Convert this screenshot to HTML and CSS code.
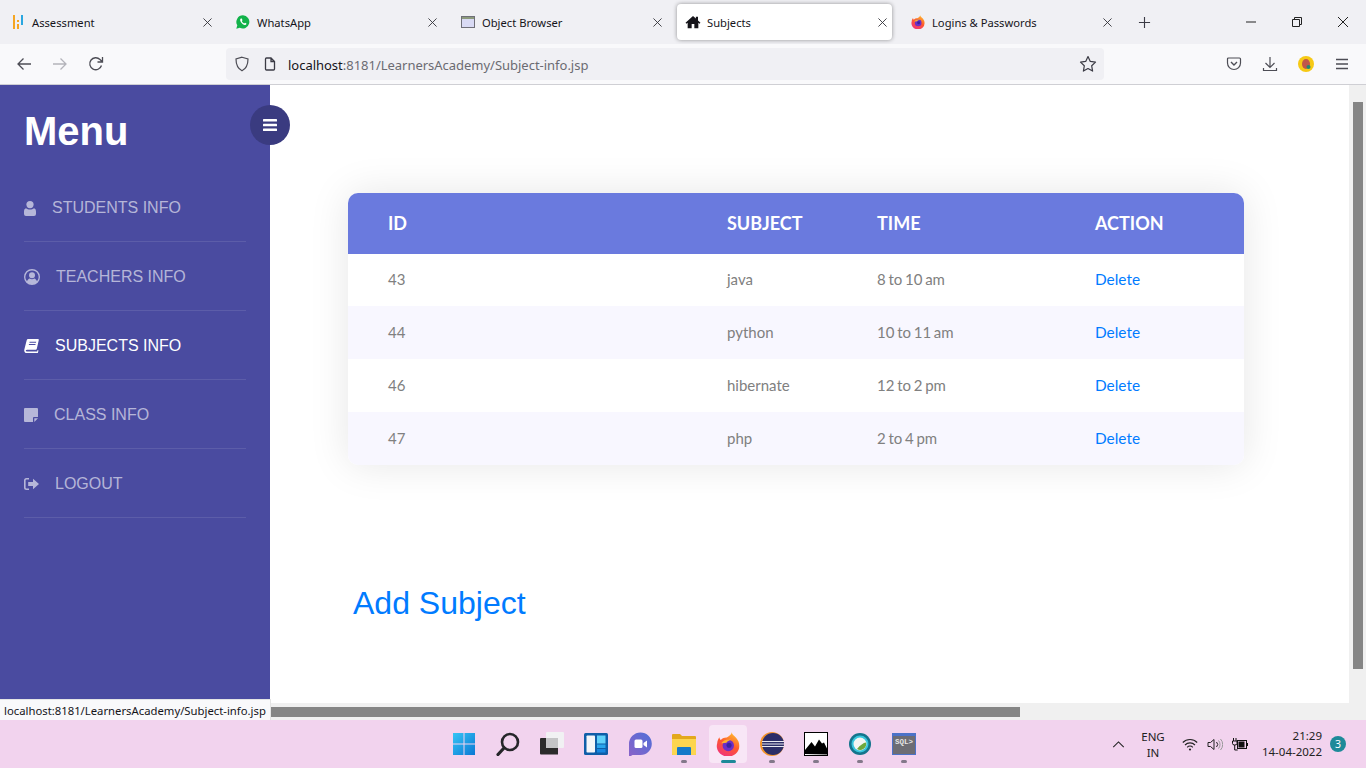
FILE: index.html
```html
<!DOCTYPE html>
<html lang="en">
  <head>
    <meta charset="UTF-8" />
    <meta name="viewport" content="width=device-width, initial-scale=1.0" />
    <title>Subjects</title>
    <link rel="stylesheet" href="styles.css">
  </head>
  <body>
    <!-- browser tabs -->
    <div class="tabbar">
      <div class="tab">
        <svg class="tab-icon" viewBox="0 0 14 14"><rect x="2" y="0" width="2" height="14" fill="#f5a623"/><rect x="6" y="5" width="2" height="2" fill="#f5a623"/><rect x="6" y="9" width="2" height="5" fill="#f5a623"/><rect x="10" y="0" width="2" height="10" fill="#2aa7e0"/></svg>
        <span class="tab-title">Assessment</span>
        <svg class="tab-close" viewBox="0 0 10 10"><path d="M.5.5l9 9M9.500.5l-9 9"/></svg>
      </div>
      <div class="tab">
        <svg class="tab-icon" viewBox="0 0 14 14"><path d="M7 .3a6.600 6.600 0 0 0-5.700 10L.3 13.700l3.500-.9A6.600 6.600 0 1 0 7 .3z" fill="#12b24a"/><path d="M4.800 3.600c-.9.7-.9 2 .2 3.600 1.200 1.700 2.800 2.900 4.200 2.700.8-.1 1.300-.8 1.200-1.400L9 7.700l-.8.8C7.200 8.100 6.200 7 5.800 6.100l.7-.8-.7-1.700z" fill="#fff"/></svg>
        <span class="tab-title">WhatsApp</span>
        <svg class="tab-close" viewBox="0 0 10 10"><path d="M.5.5l9 9M9.500.5l-9 9"/></svg>
      </div>
      <div class="tab">
        <svg class="tab-icon" viewBox="0 0 14 14"><rect x=".5" y="1.500" width="13" height="11" fill="#d9daf4" stroke="#6f6f78"/><rect x="1" y="2" width="12" height="2" fill="#8c9a7c"/></svg>
        <span class="tab-title">Object Browser</span>
        <svg class="tab-close" viewBox="0 0 10 10"><path d="M.5.5l9 9M9.500.5l-9 9"/></svg>
      </div>
      <div class="tab tab-active">
        <svg class="tab-icon tab-icon-home" viewBox="0 0 24 24"><path d="M12 3 .8 13l1.500 1.700L4 13.300V21.500h6v-6.500h4v6.500h6v-8.200l1.700 1.400L23.200 13 19.500 9.700V4h-3.200v2.800z" fill="#15141a"/></svg>
        <span class="tab-title">Subjects</span>
        <svg class="tab-close" viewBox="0 0 10 10"><path d="M.5.5l9 9M9.500.5l-9 9"/></svg>
      </div>
      <div class="tab">
        <svg class="tab-icon" viewBox="0 0 16 16"><use href="#firefox"/></svg>
        <span class="tab-title">Logins &amp; Passwords</span>
        <svg class="tab-close" viewBox="0 0 10 10"><path d="M.5.5l9 9M9.500.5l-9 9"/></svg>
      </div>
      <svg class="tab-new" viewBox="0 0 14 14"><path d="M7 1v12M1 7h12" stroke="#3b3b45" stroke-width="1.200" fill="none"/></svg>
      <div class="window-btns">
        <svg viewBox="0 0 12 12"><path d="M1 6h10" stroke="#222" fill="none"/></svg>
        <svg viewBox="0 0 12 12"><path d="M1.500 3.500h7v7h-7zM3.500 3.500v-2h7v7h-2" stroke="#222" fill="none"/></svg>
        <svg viewBox="0 0 12 12"><path d="M1 1l10 10M11 1 1 11" stroke="#222" fill="none"/></svg>
      </div>
    </div>

    <!-- address bar -->
    <div class="toolbar">
      <svg class="tool-icon tool-back" viewBox="0 0 16 16"><path d="M15 8H2M7.500 2.500 2 8l5.500 5.500" stroke="#4d4d55" stroke-width="1.300" fill="none"/></svg>
      <svg class="tool-icon tool-forward" viewBox="0 0 16 16"><path d="M1 8h13M8.500 2.500 14 8l-5.500 5.500" stroke="#b4b4ba" stroke-width="1.300" fill="none"/></svg>
      <svg class="tool-icon tool-reload" viewBox="0 0 16 16"><path d="M13.500 9.500A6 6 0 1 1 12 3.500L14 5.500M14.500 1v5h-5" stroke="#4d4d55" stroke-width="1.300" fill="none"/></svg>
      <div class="urlbar">
        <svg class="url-shield" viewBox="0 0 16 16"><path d="M8 1.200 14 3c0 5.500-1.500 9.500-6 11.800C3.500 12.500 2 8.500 2 3z" stroke="#4d4d55" stroke-width="1.200" fill="none"/></svg>
        <svg class="url-page" viewBox="0 0 12 14"><path d="M1.500 2q0-1 1-1h4.500l3.500 3.500V12q0 1-1 1h-7q-1 0-1-1zM7 1v3.500h3.500" stroke="#3b3b45" stroke-width="1.300" fill="none"/></svg>
        <span class="url-text"><b class="url-host">localhost</b>:8181/LearnersAcademy/Subject-info.jsp</span>
        <svg class="url-star" viewBox="0 0 18 18"><path d="m9 1.500 2.300 4.900 5.200.7-3.800 3.700.9 5.300L9 13.500l-4.600 2.600.9-5.300-3.800-3.700 5.200-.7z" stroke="#3b3b45" stroke-width="1.200" fill="none" stroke-linejoin="round"/></svg>
      </div>
      <div class="tool-right">
        <svg viewBox="0 0 16 16"><path d="M2.500 2h11q1 0 1 1v4a6.500 6.500 0 0 1-13 0V3q0-1 1-1z" stroke="#4d4d55" stroke-width="1.200" fill="none"/><path d="m5 6 3 3 3-3" stroke="#4d4d55" stroke-width="1.400" fill="none"/></svg>
        <svg viewBox="0 0 16 16"><path d="M8 1v10M3.500 7 8 11.500 12.500 7M1.500 12v2.500h13V12" stroke="#4d4d55" stroke-width="1.200" fill="none"/></svg>
        <svg viewBox="0 0 16 16"><circle cx="8" cy="8" r="8" fill="#f6c915"/><ellipse cx="8" cy="8" rx="4" ry="5" fill="#c0564a"/><circle cx="10.500" cy="11" r="2" fill="#1f8a70"/></svg>
        <svg viewBox="0 0 16 16"><path d="M2 3.500h12M2 8h12M2 12.500h12" stroke="#4d4d55" stroke-width="1.300" fill="none"/></svg>
      </div>
    </div>

    <!-- the page itself -->
    <div class="viewport">
      <nav class="sidebar">
        <h1 class="menu-title">Menu</h1>
        <button class="menu-toggle">
          <svg viewBox="0 0 14 12"><rect y="0" width="14" height="2.600" rx=".6"/><rect y="4.700" width="14" height="2.600" rx=".6"/><rect y="9.400" width="14" height="2.600" rx=".6"/></svg>
        </button>
        <ul class="menu-list">
          <li class="menu-item">
            <svg class="menu-icon icon-students" viewBox="0 0 12 15"><circle cx="6" cy="3.600" r="3.600"/><path d="M2 7.300c1 .8 2.500 1.200 4 1.200s3-.4 4-1.200c1.300.3 2 1.500 2 3.500v2.200q0 2-2 2H2q-2 0-2-2v-2.200c0-2 .7-3.200 2-3.500z"/></svg>
            <span class="label-students">STUDENTS INFO</span>
          </li>
          <li class="menu-item">
            <svg class="menu-icon icon-teachers" viewBox="0 0 16 16"><path fill-rule="evenodd" d="M8 0a8 8 0 1 0 0 16A8 8 0 0 0 8 0zm0 1.500a6.500 6.500 0 0 1 5 10.700c-.6-1.500-1.500-2.400-2.800-2.700-.6.500-1.300.8-2.200.8s-1.600-.3-2.200-.8c-1.300.3-2.200 1.200-2.800 2.700A6.500 6.500 0 0 1 8 1.500z"/><circle cx="8" cy="6.200" r="3"/></svg>
            <span class="label-teachers">TEACHERS INFO</span>
          </li>
          <li class="menu-item menu-item-active">
            <svg class="menu-icon icon-subjects" viewBox="0 0 15 14"><path d="M4.200 0H14q1 0 .8 1l-2 8.800q-.2 1-1.200 1H3.200q-1.300 0-1.400.8t1.200.8h10.200l.4-1.500.9.500-.8 3H2.400Q.2 13.400.2 11.500q0-.6.2-1.300L2.700 1.300Q3 0 4.200 0z"/><path fill="#4a4ba0" d="M5.600 2.700h6.600l-.2 1H5.400zM5 5h6.600l-.2 1H4.800z"/></svg>
            <span class="label-subjects">SUBJECTS INFO</span>
          </li>
          <li class="menu-item">
            <svg class="menu-icon icon-class" viewBox="0 0 14 14"><path d="M1 0h12q1 0 1 1v8h-4q-1 0-1 1v4H1q-1 0-1-1V1q0-1 1-1zM10.300 14v-3.700H14z"/></svg>
            <span class="label-class">CLASS INFO</span>
          </li>
          <li class="menu-item">
            <svg class="menu-icon icon-logout" viewBox="0 0 15 12"><path d="M5 0v1.600H2.500q-.9 0-.9.900v7q0 .9.900.9H5V12H2.500Q0 12 0 9.500v-7Q0 0 2.500 0z"/><path d="M9 .8 15 6l-6 5.200V8H4.200V4H9z"/></svg>
            <span class="label-logout">LOGOUT</span>
          </li>
        </ul>
      </nav>
      <div class="content-col">
        <main class="content">
          <div class="table-card">
            <table class="subject-table">
              <colgroup>
                <col class="col-id" /><col class="col-subject" /><col class="col-time" /><col class="col-action" />
              </colgroup>
              <thead>
                <tr><th>ID</th><th>SUBJECT</th><th>TIME</th><th>ACTION</th></tr>
              </thead>
              <tbody>
                <tr><td>43</td><td>java</td><td>8 to 10 am</td><td><a href="#">Delete</a></td></tr>
                <tr><td>44</td><td>python</td><td>10 to 11 am</td><td><a href="#">Delete</a></td></tr>
                <tr><td>46</td><td>hibernate</td><td>12 to 2 pm</td><td><a href="#">Delete</a></td></tr>
                <tr><td>47</td><td>php</td><td>2 to 4 pm</td><td><a href="#">Delete</a></td></tr>
              </tbody>
            </table>
          </div>
          <a class="add-link" href="#">Add Subject</a>
        </main>
        <div class="hscroll"><div class="hscroll-thumb"></div></div>
      </div>
      <div class="vscroll"><div class="vscroll-thumb"></div></div>
      <div class="status-tip">localhost:8181/LearnersAcademy/Subject-info.jsp</div>
    </div>

    <!-- windows taskbar -->
    <footer class="taskbar">
      <div class="task-icons">
        <div class="task-cell">
          <svg viewBox="0 0 24 24"><defs><linearGradient id="winblue" x1="0" y1="0" x2="1" y2="1"><stop offset="0" stop-color="#36c5f5"/><stop offset="1" stop-color="#0a78d4"/></linearGradient></defs><path fill="url(#winblue)" d="M1 1h10.500v10.500H1zM12.500 1H23v10.500H12.500zM1 12.500h10.500V23H1zM12.500 12.500H23V23H12.500z"/></svg>
        </div>
        <div class="task-cell">
          <svg viewBox="0 0 24 24"><circle cx="14" cy="10" r="8" stroke="#26262a" stroke-width="2.600" fill="none"/><path d="M8 16 2 22.500" stroke="#26262a" stroke-width="3.200" stroke-linecap="round"/></svg>
        </div>
        <div class="task-cell">
          <svg viewBox="0 0 24 24"><rect x="6" y="0" width="18" height="16" rx="1" fill="#f1f1f3"/><rect x="6" y="6" width="12" height="10" fill="#c4c4c6"/><path d="M1 6h5v10h12v6.500H1q-1 0-1-1V7q0-1 1-1z" fill="#2b2b2b"/></svg>
        </div>
        <div class="task-cell">
          <svg viewBox="0 0 24 24"><rect width="24" height="22" y="1" rx="1.500" fill="#0f5ea8"/><rect x="2.500" y="3.500" width="8.500" height="17" rx=".8" fill="#f4f6f8"/><rect x="13" y="3.500" width="8.500" height="8" fill="#62d2fa"/><rect x="13" y="12.500" width="8.500" height="3.500" fill="#2aa5ec"/><rect x="13" y="17" width="8.500" height="3.500" fill="#1787e0"/></svg>
        </div>
        <div class="task-cell">
          <svg viewBox="0 0 24 24"><defs><linearGradient id="chatfill" x1="1" y1="0" x2="0" y2="1"><stop offset="0" stop-color="#4f6fd8"/><stop offset="1" stop-color="#8a62c8"/></linearGradient></defs><path d="M12.500.5a11.300 11.300 0 0 1 0 22.600H4.500l-2.500 1.400q-1 .3-1-1V12A11.500 11.500 0 0 1 12.500.5z" fill="url(#chatfill)"/><rect x="6.500" y="7.500" width="8" height="8.500" rx="1.500" fill="#fff"/><path d="m15.500 11 3.500-2.500v7L15.500 13z" fill="#fff"/></svg>
        </div>
        <div class="task-cell has-dot">
          <svg viewBox="0 0 24 24"><path d="M0 3q0-1 1-1h7l2 2h13q1 0 1 1v17q0 1-1 1H1q-1 0-1-1z" fill="#e3a81d"/><path d="M0 7h24v15q0 1-1 1H1q-1 0-1-1z" fill="#fcd54f"/><path d="M5 16q0-1 1-1h12q1 0 1 1v7H5z" fill="#1479c9"/></svg>
        </div>
        <div class="task-cell task-cell-active">
          <svg viewBox="0 0 16 16"><use href="#firefox"/></svg>
        </div>
        <div class="task-cell has-dot">
          <svg viewBox="0 0 24 24"><circle cx="12" cy="12" r="12" fill="#f3932a"/><circle cx="13" cy="12" r="11" fill="#2c2d68"/><path d="M2 9.500h22M2 12h22M2 14.500h22" stroke="#e8e8f0" stroke-width="1.200"/></svg>
        </div>
        <div class="task-cell has-dot">
          <svg viewBox="0 0 24 24"><rect x=".5" y=".5" width="23" height="23" fill="#fff" stroke="#000"/><path d="M1 22V18l6.500-8 3.500 4.500 4-7 3 4 2-1 3 6v6z" fill="#000"/></svg>
        </div>
        <div class="task-cell has-dot">
          <svg viewBox="0 0 24 24"><circle cx="12" cy="12" r="11" fill="#14748c"/><circle cx="12" cy="12" r="8.500" fill="#38c6dc"/><circle cx="12" cy="12" r="6.500" fill="#f4f6f2"/><path d="M9 17a6 6 0 0 0 9-6.500q-4 .5-9 6.500z" fill="#6ea83c"/></svg>
        </div>
        <div class="task-cell has-dot">
          <svg viewBox="0 0 24 24"><rect y="1" width="24" height="22" fill="#4c72c8"/><rect x="1" y="4" width="22" height="18" fill="#6d6d74"/><text class="sql-text" x="3" y="12">SQL&gt;</text></svg>
        </div>
      </div>
      <div class="tray">
        <svg class="tray-chevron" viewBox="0 0 14 8"><path d="M1 7 7 1l6 6" stroke="#222" stroke-width="1.200" fill="none"/></svg>
        <div class="tray-lang"><span>ENG</span><span>IN</span></div>
        <svg class="tray-wifi" viewBox="0 0 16 13"><path d="M.8 4.500a10 10 0 0 1 14.400 0M3 7a7 7 0 0 1 10 0M5.200 9.300a3.800 3.800 0 0 1 5.600 0" stroke="#222" stroke-width="1.100" fill="none"/><circle cx="8" cy="11.500" r="1.100" fill="#222"/></svg>
        <svg class="tray-speaker" viewBox="0 0 16 13"><path d="M1 4.500h2.500L7 1.500v10l-3.500-3H1z" stroke="#222" fill="none"/><path d="M9.500 4a3.500 3.500 0 0 1 0 5" stroke="#222" fill="none"/><path d="M11.500 2.500a6 6 0 0 1 0 8M13.500 1a8 8 0 0 1 0 11" stroke="#999" fill="none"/></svg>
        <svg class="tray-battery" viewBox="0 0 16 13"><path d="M1.500 0v3M4 0v3M.5 3h4.500v2.500q0 1.500-2.300 1.500T.5 5.500zM2.700 7v5h3" stroke="#111" fill="none"/><rect x="5.500" y="2.500" width="9" height="8" fill="none" stroke="#111"/><rect x="6.500" y="3.500" width="6" height="6" fill="#111"/><rect x="14.500" y="5" width="1.500" height="3" fill="#111"/></svg>
        <div class="tray-clock"><span>21:29</span><span>14-04-2022</span></div>
        <span class="tray-badge">3</span>
      </div>
    </footer>

    <svg class="svg-defs" width="0" height="0">
      <defs>
        <linearGradient id="foxbody" x1="0.800" y1="0" x2="0.300" y2="1">
          <stop offset="0" stop-color="#ffc22e"/><stop offset=".5" stop-color="#ff5a2d"/><stop offset="1" stop-color="#f0337a"/>
        </linearGradient>
        <symbol id="firefox" viewBox="0 0 16 16">
          <path d="M10.500.2c.2 1.700 1.800 2.300 3 3.800C15 5.800 15.500 7.300 15.500 9A7.500 7 0 1 1 .8 7.500c.1-1.500.7-3 1.500-4 .1 1 .4 1.500.9 1.900C4.500 4 5.800 3.600 7.200 3.700 8.500 2.800 10.400 1.800 10.500.2z" fill="url(#foxbody)"/>
          <circle cx="8.200" cy="9" r="3.800" fill="#6c2fc7"/>
          <circle cx="8.700" cy="8.800" r="1.700" fill="#3a22a0"/>
          <path d="M3.500 7.500C4.800 5.400 7.500 4.500 10.300 5.300c-1.500.2-3 .8-3.300 1.900-1.200.2-2.400.5-3.500.3z" fill="#ffb02e"/>
        </symbol>
      </defs>
    </svg>
  </body>
</html>
```

FILE: styles.css
```css
* {
  box-sizing: border-box;
  padding: 0;
  margin: 0;
}
html,
body {
  width: 1366px;
  height: 768px;
  overflow: hidden;
}
body {
  display: flex;
  flex-direction: column;
  font-family: "Liberation Sans", Arial, sans-serif;
  background-color: white;
}
svg {
  display: block;
  flex: none;
}
.svg-defs {
  position: absolute;
}

/* tabs */
.tabbar {
  display: flex;
  align-items: center;
  gap: 10px;
  height: 44px;
  padding: 0 0 0 2px;
  background-color: #f0f0f4;
}
.tab {
  display: flex;
  align-items: center;
  flex: none;
  width: 215px;
  height: 36px;
  padding: 0 5px 0 9px;
  border-radius: 4px;
  font-family: "Noto Sans", sans-serif;
  font-size: 11.2px;
  color: #15141a;
}
.tab-active {
  background-color: white;
  box-shadow: 0 0 4px rgba(0, 0, 0, 0.4);
}
.tab-icon {
  width: 14px;
  height: 14px;
}
.tab-icon-home {
  width: 16px;
  height: 16px;
  margin: 0 -1px;
}
.tab-title {
  flex: 1;
  margin-left: 7px;
}
.tab-close {
  width: 9px;
  height: 9px;
  stroke: #33333a;
  fill: none;
}
.tab-new {
  width: 13px;
  height: 13px;
  margin-left: 11px;
}
.window-btns {
  display: flex;
  gap: 34px;
  margin-left: 84px;
}
.window-btns svg {
  width: 12px;
  height: 12px;
}

/* address bar */
.toolbar {
  display: flex;
  align-items: center;
  height: 41px;
  border-bottom: 1px solid #cfcfd4;
  background-color: #f9f9fb;
}
.tool-icon {
  width: 16px;
  height: 16px;
}
.tool-back {
  margin-left: 16px;
}
.tool-forward {
  margin-left: 20px;
}
.tool-reload {
  margin-left: 20px;
}
.urlbar {
  display: flex;
  align-items: center;
  width: 878px;
  height: 32px;
  margin-left: 122px;
  padding: 0 7px 0 8px;
  border-radius: 4px;
  background-color: #f0f0f4;
  font-family: "Noto Sans", sans-serif;
  font-size: 13px;
  color: #6b6b72;
}
.url-shield {
  width: 16px;
  height: 16px;
}
.url-page {
  width: 12px;
  height: 14px;
  margin-left: 14px;
}
.url-text {
  flex: 1;
  margin-left: 12px;
  padding-top: 2px;
  letter-spacing: -0.02px;
}
.url-host {
  font-weight: normal;
  color: #15141a;
}
.url-star {
  width: 18px;
  height: 18px;
}
.tool-right {
  display: flex;
  gap: 20px;
  margin-left: 122px;
}
.tool-right svg {
  width: 16px;
  height: 16px;
}

/* page */
.viewport {
  position: relative;
  display: flex;
  height: 635px;
}
.sidebar {
  position: relative;
  flex: none;
  width: 270px;
  padding: 0 24px;
  background-color: #4a4ba0;
  color: rgba(255, 255, 255, 0.6);
}
.menu-title {
  height: 88px;
  padding-top: 23px;
  font-size: 40px;
  line-height: 46px;
  font-weight: bold;
  color: white;
}
.menu-toggle {
  position: absolute;
  top: 20px;
  right: -20px;
  display: flex;
  align-items: center;
  justify-content: center;
  width: 40px;
  height: 40px;
  border: none;
  border-radius: 50%;
  background-color: #3a3b80;
  fill: white;
}
.menu-toggle svg {
  width: 14px;
  height: 12px;
}
.menu-list {
  list-style: none;
}
.menu-item {
  display: flex;
  align-items: center;
  height: 69px;
  padding-top: 2px;
  border-bottom: 1px solid rgba(255, 255, 255, 0.1);
  font-size: 16px;
  fill: rgba(255, 255, 255, 0.6);
}
.menu-item-active {
  color: white;
  fill: white;
}
.icon-students {
  width: 12px;
  height: 15px;
}
.label-students {
  margin-left: 16px;
}
.icon-teachers {
  width: 16px;
  height: 16px;
}
.label-teachers {
  margin-left: 16px;
}
.icon-subjects {
  width: 15px;
  height: 14px;
}
.label-subjects {
  margin-left: 16px;
}
.icon-class {
  width: 14px;
  height: 14px;
}
.label-class {
  margin-left: 16px;
}
.icon-logout {
  width: 15px;
  height: 12px;
}
.label-logout {
  margin-left: 16px;
}
.content-col {
  display: flex;
  flex-direction: column;
  flex: 1;
}
.content {
  flex: 1;
  padding: 108px 0 0 78px;
}
.table-card {
  width: 896px;
  overflow: hidden;
  border-radius: 10px;
  box-shadow: 0 0 40px rgba(0, 0, 0, 0.1);
}
.subject-table {
  width: 100%;
  table-layout: fixed;
  border-collapse: collapse;
  font-family: Lato, sans-serif;
}
.col-id {
  width: 379px;
}
.col-subject {
  width: 150px;
}
.col-time {
  width: 218px;
}
.col-action {
  width: 149px;
}
.subject-table th {
  height: 61px;
  padding-bottom: 2px;
  text-align: left;
  font-size: 18px;
  font-weight: bold;
  color: white;
  background-color: #6a7ade;
}
.subject-table td {
  height: 53px;
  padding-bottom: 2px;
  font-size: 15px;
  word-spacing: -1.1px;
  color: #808080;
}
.subject-table tbody tr:first-child td {
  height: 52px;
}
.subject-table th:first-child,
.subject-table td:first-child {
  padding-left: 40px;
}
.subject-table tbody tr:nth-child(even) {
  background-color: #f8f7ff;
}
.subject-table a {
  font-size: 15.4px;
  color: #007bff;
  text-decoration: none;
}
.add-link {
  display: block;
  width: max-content;
  margin: 120px 0 0 5px;
  font-size: 32px;
  line-height: 37px;
  color: #007bff;
  text-decoration: none;
}
.hscroll {
  flex: none;
  height: 17px;
  padding-top: 4px;
  background-color: #f0f0f0;
}
.hscroll-thumb {
  width: 750px;
  height: 10px;
  background-color: #858585;
}
.vscroll {
  flex: none;
  width: 17px;
  padding: 17px 3px 0 4px;
  background-color: #f0f0f0;
}
.vscroll-thumb {
  width: 10px;
  height: 567px;
  background-color: #858585;
}
.status-tip {
  position: absolute;
  left: 0;
  bottom: 0;
  width: 271px;
  height: 21px;
  padding-left: 4px;
  border: 1px solid #e4e4e4;
  border-left: none;
  border-bottom: none;
  background-color: #f9f9fb;
  font-family: "Noto Sans", sans-serif;
  font-size: 11.3px;
  line-height: 22px;
  white-space: nowrap;
  color: #15141a;
}

/* taskbar */
.taskbar {
  display: flex;
  align-items: center;
  height: 48px;
  padding-left: 442px;
  background-color: #f2d3ee;
  font-family: "Noto Sans", sans-serif;
  font-size: 11.5px;
  color: #222;
}
.task-icons {
  display: flex;
}
.task-cell {
  position: relative;
  display: flex;
  align-items: center;
  justify-content: center;
  width: 44px;
  height: 38px;
  border-radius: 4px;
}
.task-cell svg {
  width: 24px;
  height: 24px;
}
.task-cell-active {
  width: 38px;
  margin: 0 3px;
  background-color: #f8e6f6;
}
.has-dot::after,
.task-cell-active::after {
  content: "";
  position: absolute;
  left: 50%;
  bottom: 0;
  width: 6px;
  height: 3px;
  margin-left: -3px;
  border-radius: 2px;
  background-color: #83798a;
}
.task-cell-active::after {
  width: 15px;
  margin-left: -7px;
  background-color: #1d8a99;
}
.sql-text {
  font-family: "Liberation Mono", monospace;
  font-size: 7.5px;
  font-weight: bold;
  fill: #e6e6e6;
}
.tray {
  display: flex;
  align-items: center;
  margin-left: 186px;
}
.tray-chevron {
  width: 13px;
  height: 7px;
}
.tray-lang {
  display: flex;
  flex-direction: column;
  align-items: center;
  width: 30px;
  margin-left: 13px;
  padding-top: 2px;
  line-height: 16px;
}
.tray-wifi {
  width: 16px;
  height: 13px;
  margin-left: 14px;
}
.tray-speaker {
  width: 16px;
  height: 13px;
  margin-left: 9px;
}
.tray-battery {
  width: 16px;
  height: 13px;
  margin-left: 9px;
}
.tray-clock {
  display: flex;
  flex-direction: column;
  align-items: flex-end;
  width: 64px;
  margin-left: 10px;
  line-height: 16px;
}
.tray-badge {
  width: 16px;
  height: 16px;
  margin-left: 8px;
  border-radius: 50%;
  background-color: #1d8a99;
  text-align: center;
  line-height: 16px;
  font-size: 10.5px;
  color: white;
}
```
